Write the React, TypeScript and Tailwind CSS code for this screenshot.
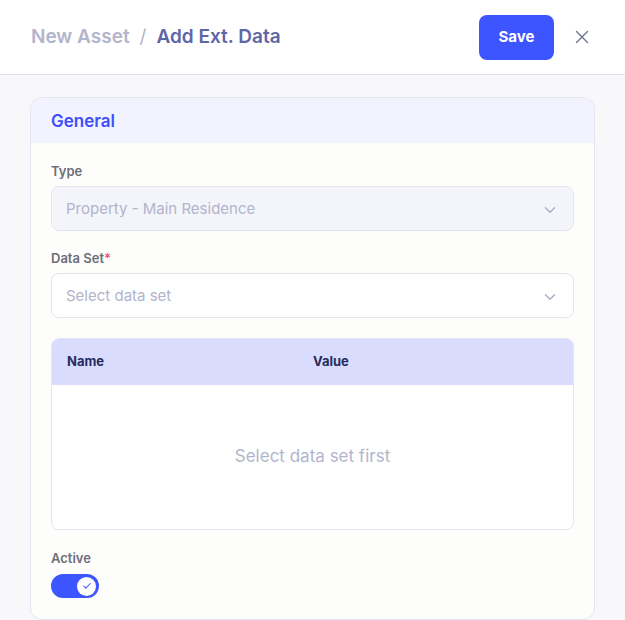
import { ChevronDown, X, Check } from "lucide-react";

const font = { fontFamily: "Inter, 'Noto Sans', sans-serif" };

function Select({ value, disabled }: { value: string; disabled?: boolean }) {
  return (
    <div
      className={`flex items-center justify-between h-[45px] px-[14px] pt-[2px] rounded-lg border border-[#e4e5f1] ${
        disabled ? "bg-[#f4f5fa]" : "bg-white"
      }`}
    >
      <span className="text-[15px] text-[#b1b4cb]">{value}</span>
      <ChevronDown className="w-[18px] h-[18px] text-[#a6a8c2]" strokeWidth={1.75} />
    </div>
  );
}

function Label({ children, className = "" }: { children: React.ReactNode; className?: string }) {
  return (
    <div className={`text-[13px] leading-[16px] font-semibold text-[#6d6e78] ${className}`}>
      {children}
    </div>
  );
}

export default function App() {
  return (
    <div className="w-[625px] h-[620px] bg-[#f8f8fa] flex flex-col overflow-hidden" style={font}>
      <div className="h-[75px] shrink-0 bg-white border-b border-[#e2e2e6] flex items-center pl-[31px] pr-[32px]">
        <div className="flex items-center gap-[10px] text-[19px] font-semibold">
          <span className="text-[#b3b5cc]">New Asset</span>
          <span className="text-[#b3b5cc] font-normal">/</span>
          <span className="text-[#5f66a6]">Add Ext. Data</span>
        </div>
        <button className="ml-auto w-[75px] h-[45px] rounded-lg bg-[#3d55ff] text-white text-[15px] font-bold">
          Save
        </button>
        <X className="ml-[17px] w-[22px] h-[22px] text-[#6f7396]" strokeWidth={1.5} />
      </div>

      <div className="px-[30px] pt-[22px]">
        <div className="rounded-xl border border-[#e4e5f0] bg-[#fdfdfc] overflow-hidden">
          <div className="h-[45px] bg-[#f2f3ff] flex items-center px-[20px] pt-[3px]">
            <span className="text-[17px] font-semibold text-[#3d4ffb]">General</span>
          </div>
          <div className="px-[20px] pt-[20px] pb-[21px]">
            <Label className="mb-[7px]">Type</Label>
            <Select value="Property - Main Residence" disabled />

            <Label className="mt-[19px] mb-[7px]">
              Data Set<span className="text-[#f0506e]">*</span>
            </Label>
            <Select value="Select data set" />

            <div className="mt-[20px] rounded-lg border border-[#e4e5f1] overflow-hidden bg-white">
              <div className="h-[46px] bg-[#d9dcfd] flex items-center text-[13px] font-bold text-[#262c5c]">
                <span className="pl-[15px] w-[261px]">Name</span>
                <span>Value</span>
              </div>
              <div className="h-[144px] flex items-center justify-center text-[17px] text-[#b2b5cc]">
                Select data set first
              </div>
            </div>

            <Label className="mt-[20px] mb-[8px]">Active</Label>
            <div className="w-[48px] h-[24px] rounded-full bg-[#3d55ff] flex items-center justify-end pr-[3px]">
              <div className="w-[19px] h-[19px] rounded-full bg-white flex items-center justify-center">
                <Check className="w-[10px] h-[10px] text-[#3d55ff]" strokeWidth={2.5} />
              </div>
            </div>
          </div>
        </div>
      </div>
    </div>
  );
}
